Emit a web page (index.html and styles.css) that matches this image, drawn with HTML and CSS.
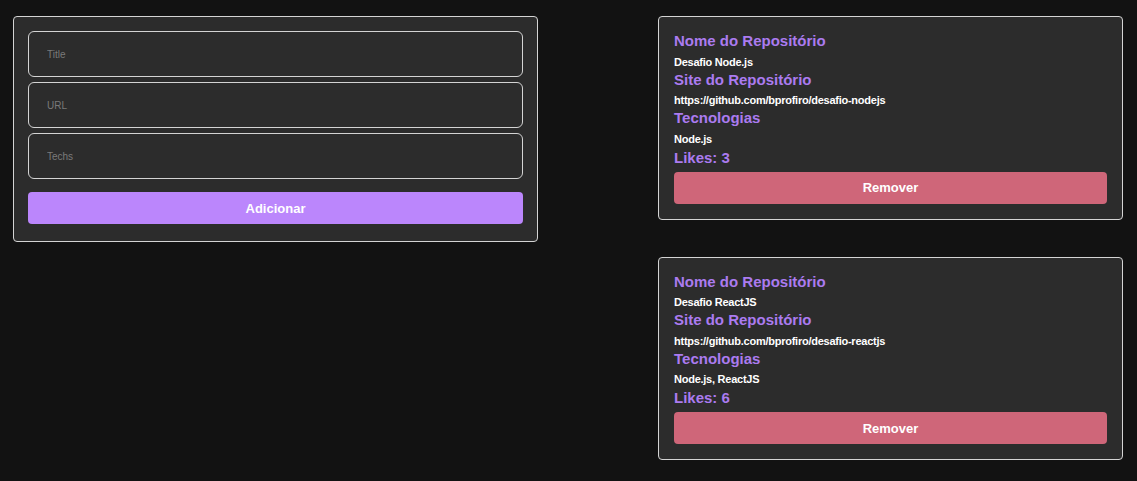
FILE: index.html
```html
<!DOCTYPE html>
<html lang="pt-BR">
<head>
<meta charset="utf-8">
<title>Repositórios</title>
<link rel="stylesheet" href="styles.css">
</head>
<body>
<div class="page">
  <form class="card form-card">
    <input class="field" type="text" placeholder="Title">
    <input class="field" type="text" placeholder="URL">
    <input class="field" type="text" placeholder="Techs">
    <button class="btn btn-add" type="button">Adicionar</button>
  </form>
  <ul class="repo-list">
    <li class="card repo">
      <h2 class="label">Nome do Repositório</h2>
      <p class="value">Desafio Node.js</p>
      <h2 class="label">Site do Repositório</h2>
      <p class="value">https://github.com/bprofiro/desafio-nodejs</p>
      <h2 class="label">Tecnologias</h2>
      <p class="value">Node.js</p>
      <h2 class="label likes">Likes: 3</h2>
      <button class="btn btn-remove" type="button">Remover</button>
    </li>
    <li class="card repo">
      <h2 class="label">Nome do Repositório</h2>
      <p class="value">Desafio ReactJS</p>
      <h2 class="label">Site do Repositório</h2>
      <p class="value">https://github.com/bprofiro/desafio-reactjs</p>
      <h2 class="label">Tecnologias</h2>
      <p class="value">Node.js, ReactJS</p>
      <h2 class="label likes">Likes: 6</h2>
      <button class="btn btn-remove" type="button">Remover</button>
    </li>
  </ul>
</div>
</body>
</html>
```

FILE: styles.css
```css
* { box-sizing: border-box; }

html, body {
  margin: 0;
  background: #121212;
  font-family: "Liberation Sans", Arial, sans-serif;
}

.page {
  display: flex;
  justify-content: space-between;
  align-items: flex-start;
  padding: 16px 14px 0 13px;
}

.card {
  background: #2c2c2c;
  border: 1px solid #d4d4d4;
  border-radius: 4px;
}

.form-card {
  width: 525px;
  margin: 0;
  padding: 14px 14px 17px 14px;
  display: flex;
  flex-direction: column;
  gap: 5px;
}

.field {
  height: 46px;
  width: 100%;
  background: #2c2c2c;
  border: 1px solid #d4d4d4;
  border-radius: 6px;
  padding: 0 18px;
  font-family: "Liberation Sans", Arial, sans-serif;
  font-size: 10px;
  color: #eee;
  outline: none;
}

.field::placeholder { color: #7a7a7a; }

.btn {
  height: 32px;
  width: 100%;
  border: 0;
  border-radius: 4px;
  color: #fff;
  font-family: "Liberation Sans", Arial, sans-serif;
  font-weight: bold;
  font-size: 13px;
}

.btn-add {
  background: #bb86fc;
  margin-top: 8px;
}

.repo-list {
  list-style: none;
  margin: 0;
  padding: 0;
  width: 465px;
  display: flex;
  flex-direction: column;
  gap: 37px;
}

.repo {
  padding: 14px 15px 15px 15px;
}

.label {
  margin: 0;
  font-size: 15px;
  line-height: 19px;
  font-weight: bold;
  color: #ab7bf0;
}

.likes { margin-top: 2px; }

.value {
  margin: 5.5px 0 1px;
  font-size: 11px;
  line-height: 13px;
  font-weight: bold;
  color: #fff;
  letter-spacing: -0.25px;
}

.btn-remove {
  background: #cf6679;
  margin-top: 5px;
}
```
